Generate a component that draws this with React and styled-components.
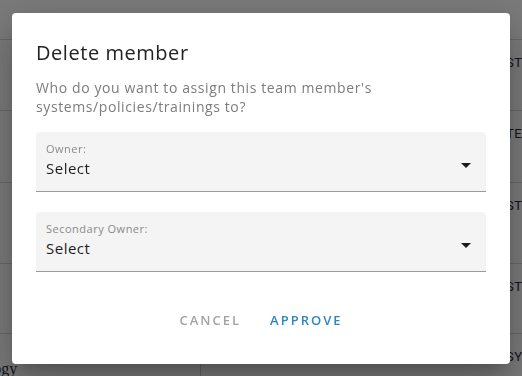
import React from 'react';
import styled, { createGlobalStyle } from 'styled-components';

const GlobalStyle = createGlobalStyle`
  html, body {
    margin: 0;
    padding: 0;
    width: 522px;
    height: 376px;
    overflow: hidden;
    background: #ffffff;
  }
`;

const Page = styled.div`
  width: 522px;
  height: 376px;
  overflow: hidden;
  position: relative;
`;

const Table = styled.div`
  display: flex;
  flex-direction: column;
  padding-top: 39px;
`;

const Row = styled.div`
  display: grid;
  grid-template-columns: 201px 305px 1fr;
  height: ${(props) => props.height}px;
  border-top: 1px solid #d8d8d8;
  box-sizing: border-box;
`;

const Cell = styled.div`
  display: flex;
  align-items: flex-start;
  padding-top: 15px;
  border-right: ${(props) => (props.divider ? '1px solid #d0d0d0' : 'none')};
  font-family: 'Roboto', sans-serif;
  font-size: 13px;
  letter-spacing: 0.5px;
  color: #2a2a2a;
  white-space: nowrap;
  overflow: hidden;
`;

const SerifCell = styled(Cell)`
  font-family: 'Liberation Serif', serif;
  font-size: 16px;
  letter-spacing: 0;
  padding-top: 26px;
  justify-content: flex-start;
`;

const Clipped = styled.span`
  margin-left: -58px;
`;

const Backdrop = styled.div`
  position: fixed;
  inset: 0;
  background: rgba(0, 0, 0, 0.52);
  display: flex;
  align-items: flex-start;
  justify-content: flex-start;
  padding: 13px 0 0 12px;
`;

const Dialog = styled.div`
  width: 498px;
  height: 351px;
  box-sizing: border-box;
  background: #ffffff;
  border-radius: 4px;
  box-shadow: 0px 11px 15px -7px rgba(0, 0, 0, 0.2),
    0px 24px 38px 3px rgba(0, 0, 0, 0.14),
    0px 9px 46px 8px rgba(0, 0, 0, 0.12);
  display: flex;
  flex-direction: column;
  padding: 27px 24px 0 24px;
  font-family: 'Open Sans', sans-serif;
`;

const Title = styled.h2`
  margin: 0;
  font-size: 20px;
  font-weight: 400;
  line-height: 26px;
  color: #222;
  letter-spacing: 0.55px;
`;

const Description = styled.p`
  margin: 12px 0 0 0;
  font-size: 14px;
  line-height: 19px;
  color: #7c7c7c;
  letter-spacing: 0.6px;
`;

const Fields = styled.div`
  display: flex;
  flex-direction: column;
  gap: 20px;
  margin-top: 16px;
`;

const SelectBox = styled.div`
  position: relative;
  height: 60px;
  box-sizing: border-box;
  background: #f4f4f4;
  border-radius: 4px 4px 0 0;
  border-bottom: 1px solid #9a9a9a;
  padding: 9px 10px 0 10px;
  display: flex;
  flex-direction: column;
  cursor: pointer;
`;

const FieldLabel = styled.span`
  font-size: 11px;
  line-height: 15px;
  color: #8a8a8a;
  letter-spacing: 0.5px;
`;

const FieldValue = styled.span`
  font-size: 15px;
  line-height: 20px;
  margin-top: 2px;
  color: #1e1e1e;
  letter-spacing: 0.5px;
`;

const Arrow = styled.svg`
  position: absolute;
  right: 15px;
  top: 31px;
  width: 10px;
  height: 5px;
`;

const Actions = styled.div`
  display: flex;
  justify-content: center;
  gap: 29px;
  margin-top: 39px;
`;

const TextButton = styled.button`
  background: none;
  border: 0;
  padding: 0;
  font-family: 'Open Sans', sans-serif;
  font-size: 13px;
  font-weight: 600;
  letter-spacing: 2px;
  text-transform: uppercase;
  color: ${(props) => (props.primary ? '#2e86c1' : '#a3a3a3')};
  cursor: pointer;
`;

function SelectField({ label }) {
  return (
    <SelectBox>
      <FieldLabel>{label}</FieldLabel>
      <FieldValue>Select</FieldValue>
      <Arrow viewBox="0 0 10 5">
        <path d="M0 0l5 5 5-5z" fill="#1a1a1a" />
      </Arrow>
    </SelectBox>
  );
}

const rows = [
  { height: 71, text: 'STATUS' },
  { height: 72, text: 'TEST' },
  { height: 81, text: 'STEP' },
  { height: 70, text: 'STEP' },
];

export default function App() {
  return (
    <Page>
      <GlobalStyle />
      <Table>
        {rows.map((row, index) => (
          <Row key={`row-${index}`} height={row.height}>
            <Cell divider />
            <Cell />
            <Cell>{row.text}</Cell>
          </Row>
        ))}
        <Row height={60}>
          <SerifCell divider>
            <Clipped>Technology</Clipped>
          </SerifCell>
          <Cell />
          <Cell>SYSTEM</Cell>
        </Row>
      </Table>
      <Backdrop>
        <Dialog role="dialog">
          <Title>Delete member</Title>
          <Description>
            Who do you want to assign this team member's systems/policies/trainings to?
          </Description>
          <Fields>
            <SelectField label="Owner:" />
            <SelectField label="Secondary Owner:" />
          </Fields>
          <Actions>
            <TextButton>Cancel</TextButton>
            <TextButton primary>Approve</TextButton>
          </Actions>
        </Dialog>
      </Backdrop>
    </Page>
  );
}
